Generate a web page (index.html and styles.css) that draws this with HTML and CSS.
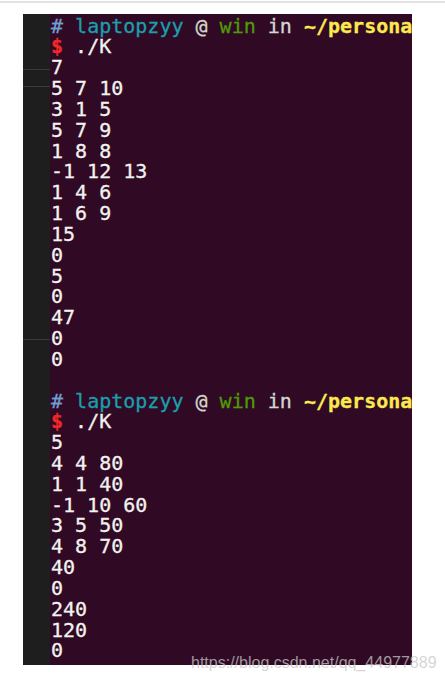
FILE: index.html
```html
<!DOCTYPE html>
<html>
<head>
<meta charset="utf-8">
<link rel="stylesheet" href="styles.css">
</head>
<body>
<div class="topline"></div>
<div class="term">
  <div class="gutter">
    <span class="gline g1"></span>
    <span class="gline g2"></span>
    <span class="gline g3"></span>
  </div>
  <div class="screen">
    <div class="ln"><span class="hash">#</span> <span class="user">laptopzyy</span> <span class="at">@</span> <span class="host">win</span> <span class="at">in</span> <span class="path">~/persona</span></div>
    <div class="ln"><span class="dollar">$</span> ./K</div>
    <div class="ln">7</div>
    <div class="ln">5 7 10</div>
    <div class="ln">3 1 5</div>
    <div class="ln">5 7 9</div>
    <div class="ln">1 8 8</div>
    <div class="ln">-1 12 13</div>
    <div class="ln">1 4 6</div>
    <div class="ln">1 6 9</div>
    <div class="ln">15</div>
    <div class="ln">0</div>
    <div class="ln">5</div>
    <div class="ln">0</div>
    <div class="ln">47</div>
    <div class="ln">0</div>
    <div class="ln">0</div>
    <div class="ln"> </div>
    <div class="ln"><span class="hash">#</span> <span class="user">laptopzyy</span> <span class="at">@</span> <span class="host">win</span> <span class="at">in</span> <span class="path">~/persona</span></div>
    <div class="ln"><span class="dollar">$</span> ./K</div>
    <div class="ln">5</div>
    <div class="ln">4 4 80</div>
    <div class="ln">1 1 40</div>
    <div class="ln">-1 10 60</div>
    <div class="ln">3 5 50</div>
    <div class="ln">4 8 70</div>
    <div class="ln">40</div>
    <div class="ln">0</div>
    <div class="ln">240</div>
    <div class="ln">120</div>
    <div class="ln">0</div>
  </div>
</div>
<div class="watermark">https://blog.csdn.net/qq_44977889</div>
</body>
</html>
```

FILE: styles.css
```css
html, body {
  margin: 0;
  padding: 0;
  background: #ffffff;
}
body {
  position: relative;
  width: 445px;
  height: 683px;
  overflow: hidden;
}
.topline {
  height: 2px;
  margin-top: 1px;
  background: #e2e2e2;
}
.term {
  display: flex;
  margin: 11px 0 0 23px;
  width: 389px;
  height: 651px;
  overflow: hidden;
  background: #300a24;
}
.gutter {
  position: relative;
  flex: 0 0 27px;
  background: #1e1e1e;
}
.gline {
  position: absolute;
  left: 0;
  width: 27px;
  height: 1px;
  background: #3a3a3a;
}
.g1 { top: 55px; }
.g2 { top: 72px; }
.g3 { top: 325px; }
.screen {
  flex: 1;
  min-width: 0;
  padding: 1.6px 0 0 1px;
  font-family: "DejaVu Sans Mono", monospace;
  font-size: 20px;
  line-height: 20.83px;
  color: #f2f2ee;
  overflow: hidden;
  -webkit-text-stroke: 0.3px currentColor;
}
.ln {
  height: 20.83px;
  white-space: pre;
}
.hash { color: #729fcf; }
.user { color: #1a9fae; }
.at { color: #d3d7cf; }
.host { color: #4e9a06; }
.path { color: #fce94f; font-weight: bold; }
.dollar { color: #ef2929; font-weight: bold; }
.watermark {
  position: absolute;
  left: 191px;
  top: 654px;
  font-family: "Liberation Sans", Arial, sans-serif;
  font-size: 16px;
  color: rgba(200, 200, 200, 0.75);
  white-space: nowrap;
}
```
